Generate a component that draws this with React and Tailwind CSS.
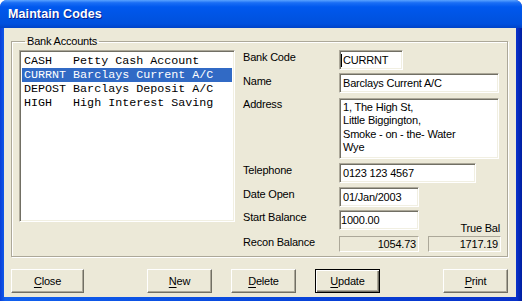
import React from 'react';

const ACCOUNTS = [
  ['CASH', 'Petty Cash Account'],
  ['CURRNT', 'Barclays Current A/C'],
  ['DEPOST', 'Barclays Deposit A/C'],
  ['HIGH', 'High Interest Saving'],
];

const sunken =
  'border border-t-[#aca899] border-l-[#aca899] border-r-white border-b-white shadow-[inset_1px_1px_0_#716f64,inset_-1px_-1px_0_#f1efe2]';

const Label = ({ children, className = '' }) => (
  <div className={`w-[96px] shrink-0 text-[11px] leading-[13px] tracking-[-0.2px] text-black ${className}`}>
    {children}
  </div>
);

const Edit = ({ w, children, className = '' }) => (
  <div className={`${w} h-[20px] bg-white ${sunken} px-[3px] flex items-center text-[11px] tracking-[-0.2px] text-black ${className}`}>
    {children}
  </div>
);

const Static = ({ w, children }) => (
  <div className={`${w} h-[16px] border border-t-[#aca899] border-l-[#aca899] border-r-white border-b-white pr-[2px] flex items-center justify-end text-[11px] tracking-[-0.2px] text-black`}>
    {children}
  </div>
);

// Access key gets underlined, like the Win32 "&Close" convention
const Button = ({ label, w = 'w-[65px]', isDefault = false, className = '' }) => (
  <button
    type="button"
    className={`${w} h-[24px] bg-[#ece9d8] text-[11px] tracking-[-0.2px] text-black flex items-center justify-center ${
      isDefault
        ? 'border border-black shadow-[inset_1px_1px_0_#fff,inset_-1px_-1px_0_#716f64,inset_-2px_-2px_0_#aca899]'
        : 'border border-t-white border-l-white border-r-[#716f64] border-b-[#716f64] shadow-[inset_-1px_-1px_0_#aca899]'
    } ${className}`}
  >
    <span className="underline underline-offset-[2px]">{label[0]}</span>
    {label.slice(1)}
  </button>
);

export default function App() {
  return (
    <div
      className="w-[522px] h-[301px] flex flex-col rounded-t-[7px] overflow-hidden bg-[linear-gradient(90deg,#0a3fd8_0%,#1160ee_1%,#0847dc_50%,#0831c9_99%,#001ea0_100%)]"
      style={{ fontFamily: '"Liberation Sans", Arial, sans-serif' }}
    >
      {/* title bar */}
      <div className="h-[28px] shrink-0 flex items-center pl-[8px] bg-[linear-gradient(180deg,#5aa3ff_0%,#1a6ef5_10%,#0058ee_25%,#0054e3_60%,#0050de_85%,#0043c8_100%)]">
        <span className="text-white font-bold text-[12.5px] tracking-[0.1px] [text-shadow:1px_1px_0_#0a1e8c]">
          Maintain Codes
        </span>
      </div>

      <div className="flex-1 ml-[4px] mr-[6px] mb-[4px] bg-[#ece9d8] flex flex-col">
        <fieldset className="mt-[7px] ml-[7px] mr-[8px] h-[222px] border border-[#aca899] shadow-[1px_1px_0_#fff,inset_1px_1px_0_#fff] pl-[7px]">
          <legend className="ml-[6px] px-[2px] text-[11px] leading-[13px] tracking-[-0.2px] text-black">
            Bank Accounts
          </legend>
          <div className="flex mt-[2px]">
            {/* account list */}
            <div className={`w-[216px] h-[172px] shrink-0 bg-white ${sunken} p-[2px] pt-[3px]`}>
              {ACCOUNTS.map(([code, name], i) => (
                <div
                  key={code}
                  className={`h-[14px] px-[2px] flex items-center whitespace-pre text-[11.7px] leading-[14px] ${
                    i === 1 ? 'bg-[#316ac5] text-white' : 'text-black'
                  }`}
                  style={{ fontFamily: '"Liberation Mono", "Courier New", monospace' }}
                >
                  {code.padEnd(7, ' ') + name}
                </div>
              ))}
            </div>

            {/* detail fields */}
            <div className="ml-[8px] flex flex-col">
              <div className="flex">
                <Label className="pt-[1px]">Bank Code</Label>
                <Edit w="w-[64px]" className="pl-[1px]">
                  <span className="w-[1px] h-[13px] bg-black mr-[1px]" />
                  CURRNT
                </Edit>
              </div>
              <div className="flex mt-[3px]">
                <Label className="pt-[2px]">Name</Label>
                <Edit w="w-[160px]">Barclays Current A/C</Edit>
              </div>
              <div className="flex mt-[5px]">
                <Label>Address</Label>
                <div className={`w-[160px] h-[61px] bg-white ${sunken} px-[3px] pt-[2px] text-[11px] leading-[13.4px] tracking-[-0.2px] text-black`}>
                  <div>1, The High St,</div>
                  <div>Little Biggington,</div>
                  <div>Smoke - on - the- Water</div>
                  <div>Wye</div>
                </div>
              </div>
              <div className="flex mt-[4px]">
                <Label className="pt-[1px]">Telephone</Label>
                <Edit w="w-[137px]">0123 123 4567</Edit>
              </div>
              <div className="flex mt-[4px]">
                <Label className="pt-[1px]">Date Open</Label>
                <Edit w="w-[80px]">01/Jan/2003</Edit>
              </div>
              <div className="flex mt-[3px]">
                <Label className="pt-[1px]">Start Balance</Label>
                <Edit w="w-[80px]" className="pl-[1px]">1000.00</Edit>
                <div className="flex-1 self-end translate-y-[5px] text-right pr-[1px] text-[11px] leading-[13px] tracking-[-0.2px] text-black">
                  True Bal
                </div>
              </div>
              <div className="flex mt-[6px]">
                <Label>Recon Balance</Label>
                <Static w="w-[80px]">1054.73</Static>
                <div className="ml-[9px]">
                  <Static w="w-[73px]">1717.19</Static>
                </div>
              </div>
            </div>
          </div>
        </fieldset>

        <div className="flex mt-[12px] pl-[7px]">
          <Button label="Close" w="w-[73px]" />
          <Button label="New" className="ml-[63px]" />
          <Button label="Delete" className="ml-[19px]" />
          <Button label="Update" isDefault className="ml-[19px]" />
          <Button label="Print" className="ml-[63px]" />
        </div>
      </div>
    </div>
  );
}
